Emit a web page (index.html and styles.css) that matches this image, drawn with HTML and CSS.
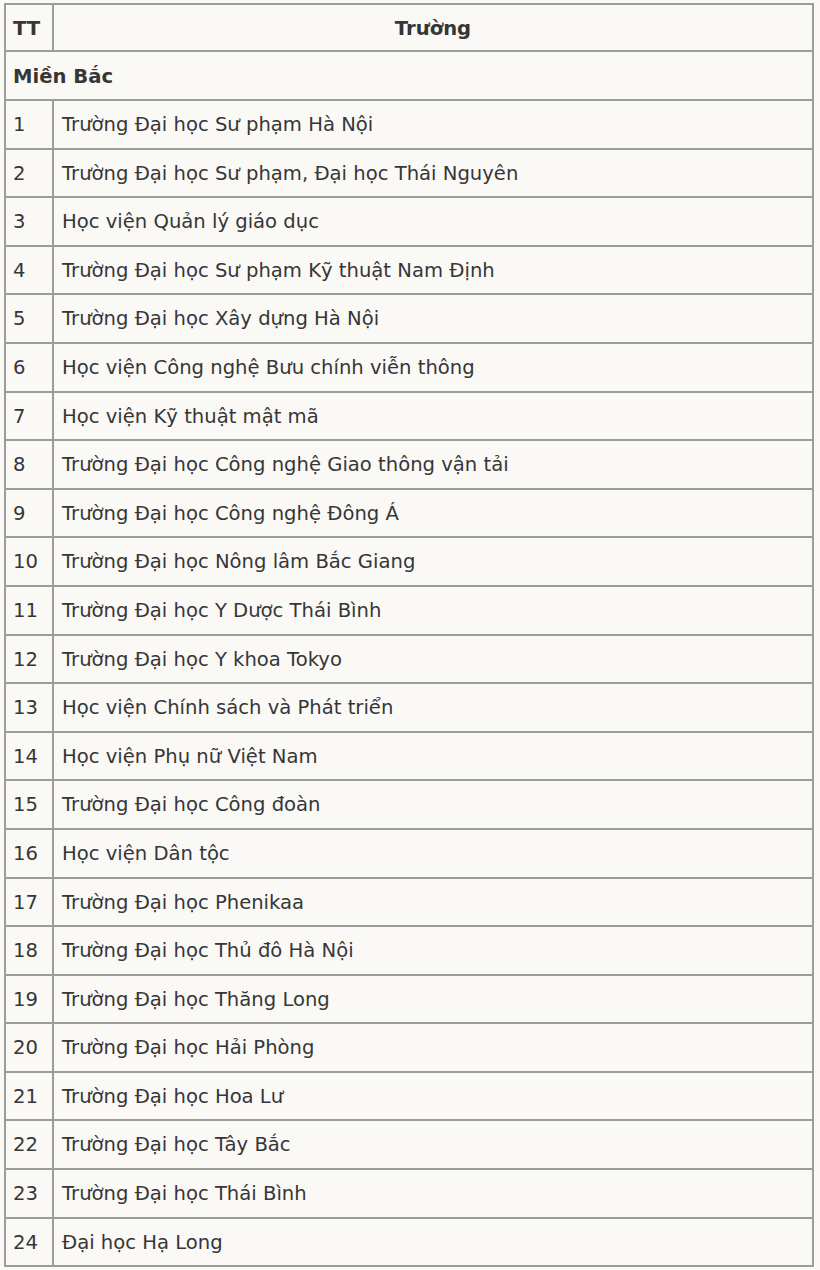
FILE: index.html
```html
<!DOCTYPE html>
<html lang="vi">
<head>
<meta charset="utf-8">
<title>Danh sách trường</title>
<link rel="stylesheet" href="styles.css">
</head>
<body>
<table class="list">
  <thead>
    <tr class="head"><th class="num">TT</th><th class="name">Trường</th></tr>
  </thead>
  <tbody>
    <tr class="region"><td colspan="2">Miền Bắc</td></tr>
    <tr><td class="num">1</td><td>Trường Đại học Sư phạm Hà Nội</td></tr>
    <tr><td class="num">2</td><td>Trường Đại học Sư phạm, Đại học Thái Nguyên</td></tr>
    <tr><td class="num">3</td><td>Học viện Quản lý giáo dục</td></tr>
    <tr><td class="num">4</td><td>Trường Đại học Sư phạm Kỹ thuật Nam Định</td></tr>
    <tr><td class="num">5</td><td>Trường Đại học Xây dựng Hà Nội</td></tr>
    <tr><td class="num">6</td><td>Học viện Công nghệ Bưu chính viễn thông</td></tr>
    <tr><td class="num">7</td><td>Học viện Kỹ thuật mật mã</td></tr>
    <tr><td class="num">8</td><td>Trường Đại học Công nghệ Giao thông vận tải</td></tr>
    <tr><td class="num">9</td><td>Trường Đại học Công nghệ Đông Á</td></tr>
    <tr><td class="num">10</td><td>Trường Đại học Nông lâm Bắc Giang</td></tr>
    <tr><td class="num">11</td><td>Trường Đại học Y Dược Thái Bình</td></tr>
    <tr><td class="num">12</td><td>Trường Đại học Y khoa Tokyo</td></tr>
    <tr><td class="num">13</td><td>Học viện Chính sách và Phát triển</td></tr>
    <tr><td class="num">14</td><td>Học viện Phụ nữ Việt Nam</td></tr>
    <tr><td class="num">15</td><td>Trường Đại học Công đoàn</td></tr>
    <tr><td class="num">16</td><td>Học viện Dân tộc</td></tr>
    <tr><td class="num">17</td><td>Trường Đại học Phenikaa</td></tr>
    <tr><td class="num">18</td><td>Trường Đại học Thủ đô Hà Nội</td></tr>
    <tr><td class="num">19</td><td>Trường Đại học Thăng Long</td></tr>
    <tr><td class="num">20</td><td>Trường Đại học Hải Phòng</td></tr>
    <tr><td class="num">21</td><td>Trường Đại học Hoa Lư</td></tr>
    <tr><td class="num">22</td><td>Trường Đại học Tây Bắc</td></tr>
    <tr><td class="num">23</td><td>Trường Đại học Thái Bình</td></tr>
    <tr><td class="num">24</td><td>Đại học Hạ Long</td></tr>
  </tbody>
</table>
</body>
</html>
```

FILE: styles.css
```css
html, body {
  margin: 0;
  background: #faf9f6;
}
body {
  padding: 3px 0 0 4px;
  font-family: "DejaVu Sans", Verdana, sans-serif;
  font-size: 19.6px;
  color: #363636;
}
.list {
  border-collapse: separate;
  border-spacing: 0;
  width: 810px;
  border-top: 2px solid #9c9c9a;
  border-left: 2px solid #9c9c9a;
  table-layout: fixed;
}
.list th, .list td {
  border-right: 2px solid #9c9c9a;
  border-bottom: 2px solid #9c9c9a;
  padding: 2px 0 0 8px;
  line-height: 44.6px;
  text-align: left;
  white-space: nowrap;
  overflow: hidden;
}
.list .num {
  width: 39px;
  padding-left: 7px;
}
.head th {
  font-weight: bold;
  line-height: 43px;
}
.head th.name {
  text-align: center;
  padding-left: 0;
}
.region td {
  font-weight: bold;
  line-height: 45px;
  padding-left: 7px;
}
```
